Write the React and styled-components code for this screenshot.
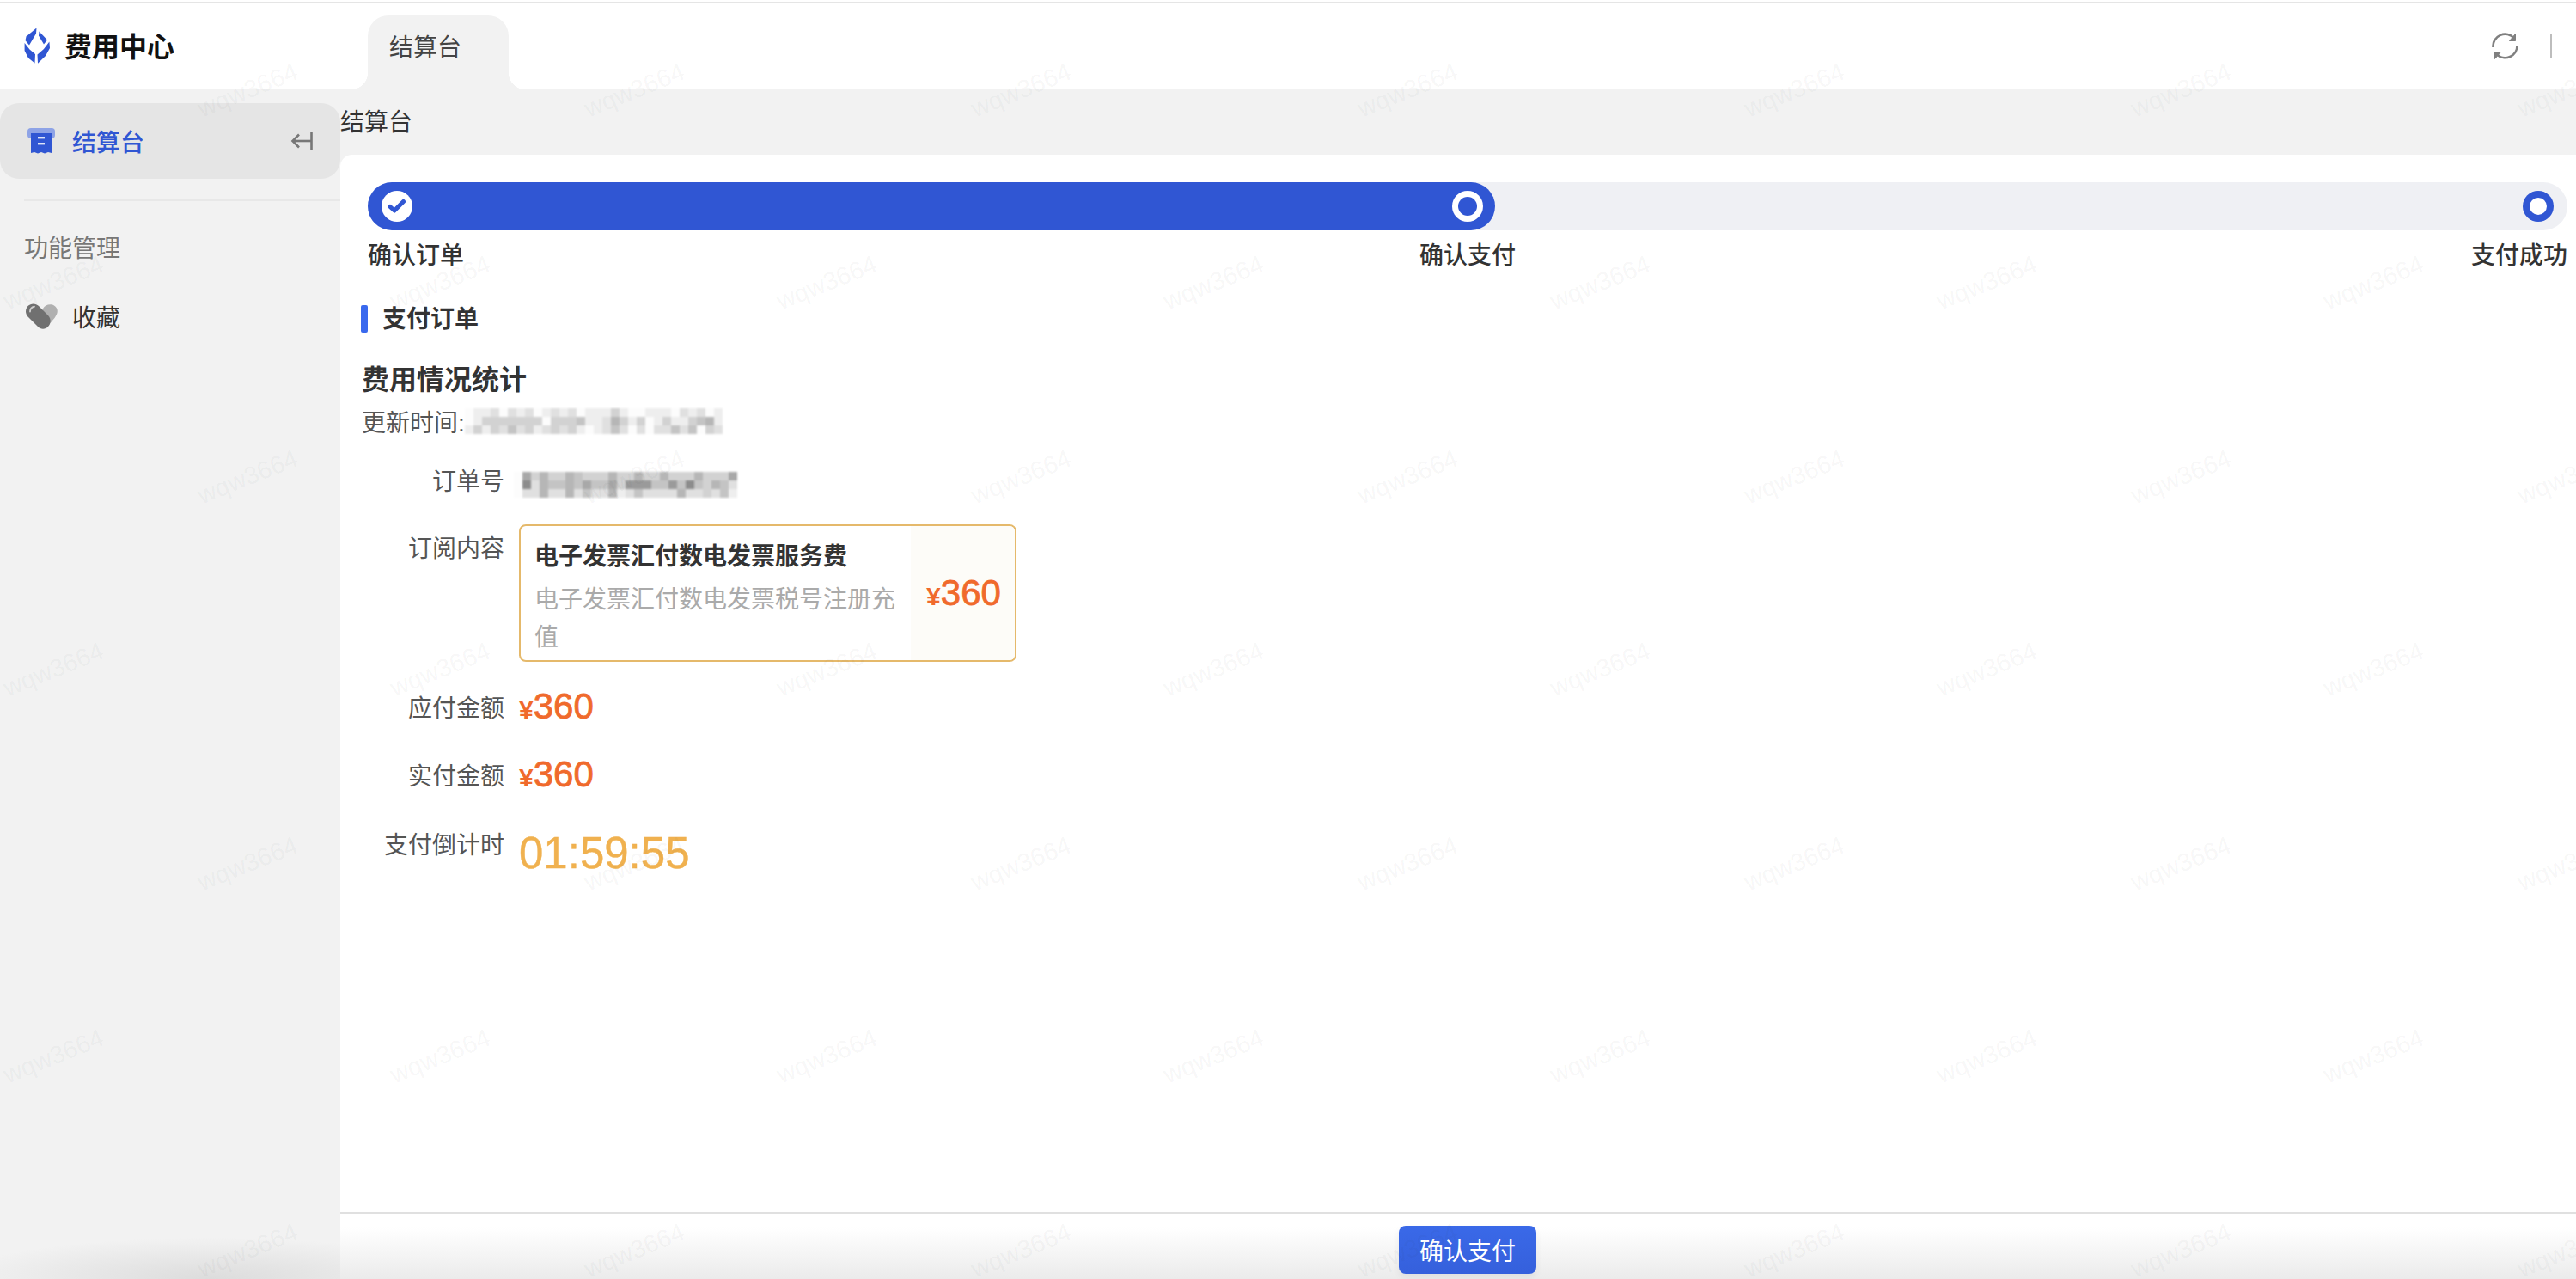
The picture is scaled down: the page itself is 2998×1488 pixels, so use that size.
import React from 'react'
import styled, { createGlobalStyle } from 'styled-components'

const blue = '#3056d3'
const orange = '#f06a2c'
const font = '"Liberation Sans", "Noto Sans CJK SC", sans-serif'

const GlobalStyle = createGlobalStyle`
  html, body {
    margin: 0;
    padding: 0;
    height: 100%;
    overflow: hidden;
    background: #fff;
  }
  * { box-sizing: border-box; }
`

const Page = styled.div`
  position: relative;
  height: 100vh;
  display: flex;
  flex-direction: column;
  font-family: ${font};
  color: #333;
  overflow: hidden;
`

const Header = styled.header`
  height: 104px;
  flex: none;
  display: flex;
  align-items: flex-start;
  background: #fff;
  position: relative;
  &::before {
    content: '';
    position: absolute;
    top: 2px;
    left: 0;
    right: 0;
    height: 2px;
    background: #e5e5e5;
  }
`

const Brand = styled.div`
  width: 428px;
  height: 104px;
  flex: none;
  padding: 0 0 0 28px;
  display: flex;
  align-items: center;
  gap: 17px;
  font-size: 32px;
  font-weight: 600;
  color: #111;
  svg {
    margin-top: 2px;
  }
`

const Tab = styled.div`
  position: relative;
  width: 164px;
  height: 86px;
  margin-top: 18px;
  padding: 0 0 17px 25px;
  display: flex;
  align-items: center;
  font-size: 28px;
  color: #444;
  background: #f2f2f2;
  border-radius: 24px 24px 0 0;
  &::before, &::after {
    content: '';
    position: absolute;
    bottom: 0;
    width: 20px;
    height: 20px;
  }
  &::before {
    left: -20px;
    background: radial-gradient(circle at 0 0, #fff 20px, #f2f2f2 20.5px);
  }
  &::after {
    right: -20px;
    background: radial-gradient(circle at 100% 0, #fff 20px, #f2f2f2 20.5px);
  }
`

const HeaderTools = styled.div`
  margin-left: auto;
  height: 104px;
  padding: 4px 28px 0 0;
  display: flex;
  align-items: center;
  gap: 36px;
`

const ToolDivider = styled.span`
  width: 2px;
  height: 28px;
  background: #bdbdbd;
`

const Body = styled.div`
  flex: 1;
  min-height: 0;
  display: flex;
  background: #f2f2f2;
`

const Sidebar = styled.aside`
  width: 396px;
  flex: none;
  padding-top: 16px;
  background:
    radial-gradient(ellipse 300px 48px at 62% 100%, #dcdcdc, rgba(220, 220, 220, 0));
`

const NavItem = styled.div`
  height: 88px;
  padding: 0 32px;
  display: flex;
  align-items: center;
  gap: 20px;
  font-size: 28px;
  font-weight: 500;
  color: ${blue};
  background: #e5e5e5;
  border-radius: 22px;
`

const Collapse = styled.span`
  margin-left: auto;
  display: flex;
`

const SideDivider = styled.div`
  height: 2px;
  margin: 24px 0 0 28px;
  background: #e8e8e8;
`

const GroupTitle = styled.div`
  margin: 36px 0 0 28px;
  line-height: 40px;
  font-size: 28px;
  color: #777;
`

const FavItem = styled.div`
  height: 40px;
  margin-top: 38px;
  padding-left: 30px;
  display: flex;
  align-items: center;
  gap: 16px;
  font-size: 28px;
  color: #333;
`

const Main = styled.main`
  flex: 1;
  min-width: 0;
  display: flex;
  flex-direction: column;
`

const Crumb = styled.div`
  height: 76px;
  flex: none;
  display: flex;
  align-items: center;
  padding-bottom: 4px;
  font-size: 28px;
  color: #333;
`

const Content = styled.section`
  flex: 1;
  min-height: 0;
  padding: 32px 10px 0 24px;
  background: #fff;
  border-radius: 14px 0 0 0;
`

const Track = styled.div`
  height: 56px;
  margin-left: 8px;
  padding-right: 16px;
  display: flex;
  align-items: center;
  justify-content: space-between;
  background: #eff0f4;
  border-radius: 28px;
`

const Fill = styled.div`
  width: 1312px;
  height: 56px;
  padding: 0 14px 0 16px;
  display: flex;
  align-items: center;
  justify-content: space-between;
  background: ${blue};
  border-radius: 28px;
`

const Dot = styled.span`
  width: 36px;
  height: 36px;
  display: flex;
  align-items: center;
  justify-content: center;
  border-radius: 50%;
  background: ${p => (p.$end ? blue : '#fff')};
  &::after {
    content: '';
    display: ${p => (p.$check ? 'none' : 'block')};
    width: ${p => (p.$end ? 20 : 22)}px;
    height: ${p => (p.$end ? 20 : 22)}px;
    border-radius: 50%;
    background: ${p => (p.$end ? '#fff' : blue)};
  }
`

const StepLabels = styled.div`
  margin: 10px 2px 0 8px;
  display: flex;
  justify-content: space-between;
  line-height: 40px;
  font-size: 28px;
  font-weight: 500;
  color: #333;
`

const StepLabel = styled.span`
  width: 110px;
  white-space: nowrap;
`

const SectionHead = styled.h2`
  position: relative;
  margin: 32px 0 0;
  padding-left: 25px;
  line-height: 44px;
  font-size: 28px;
  font-weight: 600;
  color: #333;
  &::before {
    content: '';
    position: absolute;
    left: 0;
    top: 5px;
    width: 8px;
    height: 32px;
    border-radius: 2px;
    background: #3a69ee;
  }
`

const StatTitle = styled.h3`
  margin: 26px 0 0;
  padding-left: 1px;
  line-height: 44px;
  font-size: 32px;
  font-weight: 600;
  color: #333;
`

const UpdateLine = styled.div`
  height: 44px;
  margin-top: 4px;
  padding-left: 1px;
  display: flex;
  align-items: center;
  font-size: 28px;
  color: #555;
`

const FormRow = styled.div`
  display: flex;
  gap: 17px;
  margin-top: ${p => p.$top}px;
`

const Label = styled.div`
  width: 167px;
  flex: none;
  padding-top: ${p => p.$pad || 0}px;
  line-height: 44px;
  text-align: right;
  white-space: nowrap;
  font-size: 28px;
  color: #555;
`

const Mosaic = styled.div`
  display: grid;
  grid-template-columns: repeat(${p => p.$cols}, 10px);
  grid-auto-rows: 10px;
  margin-left: ${p => p.$left || 0}px;
  margin-top: ${p => p.$down || 0}px;
  filter: blur(0.8px);
`

const Cell = styled.i.attrs(p => ({
  style: { background: `rgba(0, 0, 0, ${p.$shade * 0.055 + 0.01})` },
}))`
  display: block;
`

const PlanCard = styled.div`
  width: 579px;
  height: 160px;
  display: flex;
  overflow: hidden;
  border: 2px solid #e5b96b;
  border-radius: 8px;
`

const PlanInfo = styled.div`
  flex: 1;
  min-width: 0;
  padding: 14px 14px 0 16px;
`

const PlanName = styled.div`
  line-height: 44px;
  white-space: nowrap;
  font-size: 28px;
  font-weight: 600;
  color: #333;
`

const PlanDesc = styled.div`
  margin-top: 6px;
  line-height: 44px;
  font-size: 28px;
  color: #aaa;
`

const PlanPrice = styled.div`
  width: 121px;
  flex: none;
  padding: 4px 0 0 2px;
  display: flex;
  align-items: center;
  justify-content: center;
  background: #fdfcf8;
`

const Amount = styled.div`
  display: flex;
  align-items: baseline;
  line-height: 44px;
  font-size: 42px;
  color: ${orange};
  -webkit-text-stroke: 0.8px ${orange};
  span {
    font-size: 30px;
    font-weight: 700;
    -webkit-text-stroke: 0;
  }
`

const Countdown = styled.div`
  margin-top: 1px;
  line-height: 60px;
  font-size: 51px;
  color: #f0b14f;
  -webkit-text-stroke: 0.4px #f0b14f;
`

const Footer = styled.footer`
  height: 78px;
  flex: none;
  padding: 14px 0 0 22px;
  display: flex;
  justify-content: center;
  border-top: 2px solid #e0e0e0;
  background: linear-gradient(#fff, #fff 16px, #ebebeb);
`

const PayButton = styled.button`
  width: 160px;
  height: 56px;
  padding: 0;
  font-family: inherit;
  font-size: 28px;
  color: #fff;
  border: 0;
  border-radius: 8px;
  background: linear-gradient(#3a69e8, #3560dc);
  box-shadow: 0 4px 8px rgba(0, 0, 0, 0.06);
`

const WatermarkLayer = styled.div`
  position: absolute;
  inset: 0;
  display: grid;
  grid-template-columns: repeat(7, 450px);
  grid-auto-rows: 450px;
  pointer-events: none;
  overflow: hidden;
`

const WatermarkTile = styled.div`
  position: relative;
`

const Mark = styled.span`
  position: absolute;
  left: ${p => p.$x - 60}px;
  top: ${p => p.$y - 16}px;
  width: 120px;
  line-height: 32px;
  text-align: center;
  font-size: 29px;
  color: rgba(40, 50, 50, 0.05);
  transform: rotate(-22deg);
  white-space: nowrap;
`

const LogoIcon = () => (
  <svg width="30" height="42" viewBox="0 0 30 42">
    <g fill="#3056d3">
      <path d="M14.5 0.5 L14 7 L6 20.5 L1.5 15 L2.5 10.5 Z" />
      <path d="M17.5 4.5 L27 14.5 L23 19.5 L17 9.5 Z" />
      <path d="M0.6 18 L6.5 25.5 L13 31 L12.5 41.5 L5 35.5 L0.6 27 Z" />
      <path d="M29.4 16.5 L30 24 L25 33 L16 41.8 L15.5 31.5 L23 25 Z" />
    </g>
  </svg>
)

const ReceiptIcon = () => (
  <svg width="32" height="30" viewBox="0 0 32 30">
    <rect x="0" y="0" width="32" height="12" rx="4" fill="#8ea3e6" />
    <path d="M4 6 H28 V29 L24 28 L20 29.5 L16 28 L12 29.5 L8 28 L4 29 Z" fill="#3056d3" />
    <rect x="12" y="10" width="8" height="2.4" fill="#dfe5f8" />
    <rect x="12" y="17" width="8" height="2.4" fill="#dfe5f8" />
  </svg>
)

const CollapseIcon = () => (
  <svg width="26" height="22" viewBox="0 0 26 22" fill="none" stroke="#777" strokeWidth="2.6">
    <path d="M24.5 1 V21" />
    <path d="M24 11 H3" />
    <path d="M10 3.5 L2.5 11 L10 18.5" />
  </svg>
)

const HeartIcon = () => (
  <svg width="38" height="30" viewBox="0 0 38 30">
    <path d="M20 6 C23 0 34 -1 36.5 7 C38 13 33 18 25 27 L18 20 Z" fill="#b0b0b0" />
    <path d="M2.5 3 C6 -0.5 11.5 -0.5 15 3 L26 14 C29.5 17.5 29.5 23.5 26 27 C22.5 30.5 17.5 30.5 14 27 L2.5 15.5 C-0.8 12 -0.8 6.5 2.5 3 Z" fill="#707070" />
    <path d="M5 9.5 C5 6 7 4.2 10 3.6" fill="none" stroke="#cfcfcf" strokeWidth="1.8" strokeLinecap="round" />
  </svg>
)

const RefreshIcon = () => (
  <svg width="32" height="32" viewBox="0 0 32 32" fill="none" stroke="#808080" strokeWidth="2.6">
    <path d="M1.5 17 A14 14 0 0 1 26 6.5" />
    <path d="M29.5 15 A14 14 0 0 1 6 25.5" />
    <path d="M27.5 1.5 V9.5 H20.5 Z" fill="#808080" strokeWidth="1" />
    <path d="M3.5 30.5 V22.5 H10.5 Z" fill="#808080" strokeWidth="1" />
  </svg>
)

const CheckIcon = () => (
  <svg width="22" height="18" viewBox="0 0 22 18" fill="none" stroke="#3056d3" strokeWidth="5" strokeLinecap="round" strokeLinejoin="round">
    <path d="M3 9.5 L8 14 L18.5 3.5" />
  </svg>
)

const dateBlur = [
  '011202120121201113100111021201212',
  '013333333033341125313013113451333',
  '131324231232310124202022424032323',
]

const orderBlur = [
  '06353354333533533533353336',
  '08254454644637774474843542',
  '02252252422512422225223241',
]

const Blur = ({ rows, cols, left, down }) => (
  <Mosaic $cols={cols} $left={left} $down={down}>
    {rows.map((row, r) =>
      row.slice(0, cols).split('').map((s, c) => <Cell key={r + '-' + c} $shade={Number(s)} />)
    )}
  </Mosaic>
)

const tiles = Array.from({ length: 28 }, (_, i) => i)

const App = () => (
  <Page>
    <GlobalStyle />
    <Header>
      <Brand>
        <LogoIcon />
        费用中心
      </Brand>
      <Tab>结算台</Tab>
      <HeaderTools>
        <RefreshIcon />
        <ToolDivider />
      </HeaderTools>
    </Header>

    <Body>
      <Sidebar>
        <NavItem>
          <ReceiptIcon />
          结算台
          <Collapse><CollapseIcon /></Collapse>
        </NavItem>
        <SideDivider />
        <GroupTitle>功能管理</GroupTitle>
        <FavItem>
          <HeartIcon />
          收藏
        </FavItem>
      </Sidebar>

      <Main>
        <Crumb>结算台</Crumb>
        <Content>
          <Track>
            <Fill>
              <Dot $check><CheckIcon /></Dot>
              <Dot />
            </Fill>
            <Dot $end />
          </Track>
          <StepLabels>
            <StepLabel>确认订单</StepLabel>
            <StepLabel>确认支付</StepLabel>
            <StepLabel>支付成功</StepLabel>
          </StepLabels>

          <SectionHead>支付订单</SectionHead>
          <StatTitle>费用情况统计</StatTitle>
          <UpdateLine>
            更新时间:
            <Blur rows={dateBlur} cols={30} left={0} down={0} />
          </UpdateLine>

          <FormRow $top={27}>
            <Label>订单号</Label>
            <Blur rows={orderBlur} cols={26} left={-6} down={10} />
          </FormRow>

          <FormRow $top={27}>
            <Label $pad={7}>订阅内容</Label>
            <PlanCard>
              <PlanInfo>
                <PlanName>电子发票汇付数电发票服务费</PlanName>
                <PlanDesc>电子发票汇付数电发票税号注册充值</PlanDesc>
              </PlanInfo>
              <PlanPrice>
                <Amount><span>¥</span>360</Amount>
              </PlanPrice>
            </PlanCard>
          </FormRow>

          <FormRow $top={30}>
            <Label $pad={3}>应付金额</Label>
            <Amount><span>¥</span>360</Amount>
          </FormRow>

          <FormRow $top={31}>
            <Label $pad={3}>实付金额</Label>
            <Amount><span>¥</span>360</Amount>
          </FormRow>

          <FormRow $top={35}>
            <Label>支付倒计时</Label>
            <Countdown>01:59:55</Countdown>
          </FormRow>
        </Content>
        <Footer>
          <PayButton>确认支付</PayButton>
        </Footer>
      </Main>
    </Body>

    <WatermarkLayer>
      {tiles.map(i => (
        <WatermarkTile key={i}>
          <Mark $x={287} $y={105}>wqw3664</Mark>
          <Mark $x={61} $y={329}>wqw3664</Mark>
        </WatermarkTile>
      ))}
    </WatermarkLayer>
  </Page>
)

export default App
